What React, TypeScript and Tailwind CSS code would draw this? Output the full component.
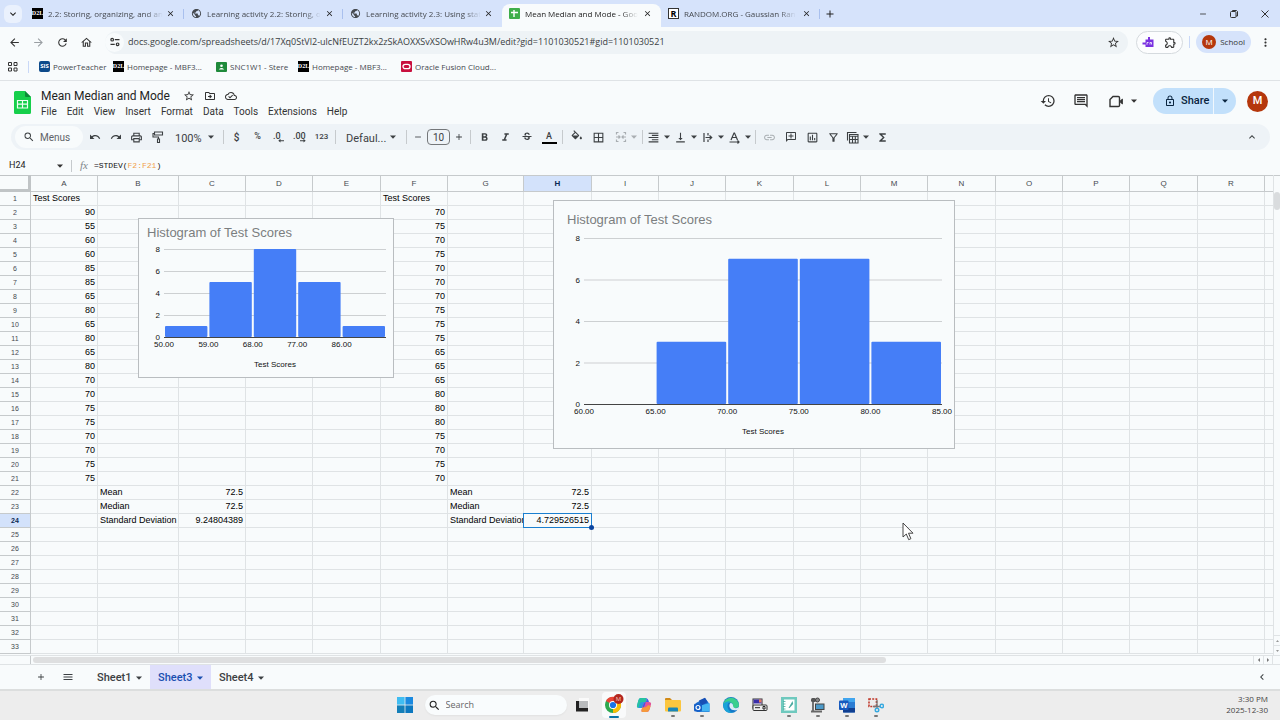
import type { ReactNode } from 'react';
import clsx from 'clsx';
import {
  MdAdd,
  MdArrowBack,
  MdArrowForward,
  MdBorderAll,
  MdChevronLeft,
  MdClose,
  MdExpandLess,
  MdExpandMore,
  MdFormatAlignRight,
  MdFormatBold,
  MdFormatItalic,
  MdFunctions,
  MdHistory,
  MdLink,
  MdMenu,
  MdMoreVert,
  MdOutlineAddComment,
  MdOutlineCloudDone,
  MdOutlineComment,
  MdOutlineDriveFileMove,
  MdOutlineExtension,
  MdOutlineFilterAlt,
  MdOutlineHome,
  MdOutlineInsertChart,
  MdOutlineLock,
  MdOutlinePrint,
  MdPublic,
  MdRedo,
  MdRefresh,
  MdRemove,
  MdSearch,
  MdStarOutline,
  MdStrikethroughS,
  MdUndo,
  MdVerticalAlignBottom,
} from 'react-icons/md';

const COLUMNS = [
  { id: 'A', width: 67 },
  { id: 'B', width: 81 },
  { id: 'C', width: 67 },
  { id: 'D', width: 67 },
  { id: 'E', width: 68 },
  { id: 'F', width: 67 },
  { id: 'G', width: 76 },
  { id: 'H', width: 68 },
  { id: 'I', width: 67 },
  { id: 'J', width: 67 },
  { id: 'K', width: 68 },
  { id: 'L', width: 67 },
  { id: 'M', width: 67 },
  { id: 'N', width: 68 },
  { id: 'O', width: 67 },
  { id: 'P', width: 67 },
  { id: 'Q', width: 68 },
  { id: 'R', width: 67 },
];

const ROW_COUNT = 33;
const ACTIVE = { column: 'H', row: 24 };

const scoresA = [90, 55, 60, 60, 85, 85, 65, 80, 65, 80, 65, 80, 70, 70, 75, 75, 70, 70, 75, 75];
const scoresF = [70, 75, 70, 75, 70, 70, 70, 75, 75, 75, 65, 65, 65, 80, 80, 80, 75, 70, 75, 70];

const cells: Record<string, string | number> = {
  A1: 'Test Scores',
  F1: 'Test Scores',
  B22: 'Mean',
  C22: 72.5,
  B23: 'Median',
  C23: 72.5,
  B24: 'Standard Deviation',
  C24: 9.24804389,
  G22: 'Mean',
  H22: 72.5,
  G23: 'Median',
  H23: 72.5,
  G24: 'Standard Deviation',
  H24: 4.729526515,
};
scoresA.forEach((score, i) => (cells[`A${i + 2}`] = score));
scoresF.forEach((score, i) => (cells[`F${i + 2}`] = score));

function Caret({ className = 'h-1 w-1.5' }: { className?: string }) {
  return (
    <svg viewBox="0 0 6 4" className={clsx('shrink-0', className)} fill="currentColor">
      <path d="M0 .5h6L3 3.7z" />
    </svg>
  );
}

/* ---------- Browser ---------- */

function D2LIcon() {
  return (
    <span className="flex h-[11px] w-[11px] shrink-0 items-center justify-center bg-black font-['Liberation_Serif',serif] text-[6px] font-bold text-white">
      D2L
    </span>
  );
}

function SheetsFavicon() {
  return (
    <svg viewBox="0 0 11 11" className="h-[11px] w-[11px] shrink-0">
      <rect width="11" height="11" rx="1" fill="#3fae49" />
      <path d="M5 2v7M2 4.5h7" stroke="#fff" strokeWidth="1.4" />
    </svg>
  );
}

const browserTabs: { title: string; icon: ReactNode; active?: boolean; divider?: boolean }[] = [
  { title: '2.2: Storing, organizing, and an', icon: <D2LIcon />, divider: true },
  {
    title: 'Learning activity 2.2: Storing, o',
    icon: <MdPublic className="h-[11px] w-[11px] shrink-0" />,
    divider: true,
  },
  {
    title: 'Learning activity 2.3: Using stat',
    icon: <MdPublic className="h-[11px] w-[11px] shrink-0" />,
  },
  { title: 'Mean Median and Mode - Goo', icon: <SheetsFavicon />, active: true },
  {
    title: 'RANDOM.ORG - Gaussian Ran',
    icon: (
      <span className="flex h-[11px] w-[11px] shrink-0 items-center justify-center border border-[#333] bg-white text-[9px] font-bold text-black">
        R
      </span>
    ),
    divider: true,
  },
];

function TabStrip() {
  return (
    <div className="flex h-[27px] items-center bg-[#d6e3fb] text-[#45494f]">
      <button
        aria-label="Search tabs"
        className="mr-[3px] ml-1 flex h-[18px] w-[18px] items-center justify-center rounded-md bg-[#eaf1fd]"
      >
        <MdExpandMore className="h-3 w-3 text-[#222]" />
      </button>
      {browserTabs.map(tab => (
        <div
          key={tab.title}
          className={clsx(
            'flex h-[23px] w-[159px] items-center self-end pr-2 pb-1 pl-[7px]',
            tab.active && 'rounded-t-lg bg-[#f8fbfc] text-[#222]',
          )}
        >
          {tab.icon}
          <span className="ml-[5px] mask-r-from-85% text-[8px] leading-4 whitespace-nowrap">{tab.title}</span>
          <button aria-label={`Close ${tab.title}`} className="ml-auto">
            <MdClose className="h-[9px] w-[9px] text-[#222]" />
          </button>
          <span className={clsx('-mr-2 ml-2 h-2.5 w-px', tab.divider && 'bg-[#a9c0ee]')} />
        </div>
      ))}
      <button aria-label="New tab" className="ml-1 text-[#222]">
        <MdAdd className="h-3 w-3" />
      </button>
      <div className="mr-2.5 ml-auto flex items-center gap-[21px] text-[#333]">
        <button aria-label="Minimize">
          <MdRemove className="h-2.5 w-2.5" />
        </button>
        <button aria-label="Restore">
          <svg viewBox="0 0 10 10" className="h-2.5 w-2.5" fill="none" stroke="currentColor">
            <rect x="1.5" y="2.5" width="5.5" height="6" rx="1" />
            <path d="M3.5 2.5v-1h4l1 1v4.5h-1.5" />
          </svg>
        </button>
        <button aria-label="Close window">
          <svg viewBox="0 0 10 10" className="h-2.5 w-2.5" stroke="currentColor">
            <path d="M1.5 1.5l7 7M8.5 1.5l-7 7" />
          </svg>
        </button>
      </div>
    </div>
  );
}

function AddressBar() {
  return (
    <div className="flex h-[30px] items-center px-2 text-[#45494f]">
      <div className="mr-3 flex items-center gap-[11px] text-[#333]">
        <button aria-label="Back">
          <MdArrowBack className="h-[13px] w-[13px]" />
        </button>
        <button aria-label="Forward" className="text-[#9a9fa3]">
          <MdArrowForward className="h-[13px] w-[13px]" />
        </button>
        <button aria-label="Reload">
          <MdRefresh className="h-[13px] w-[13px]" />
        </button>
        <button aria-label="Home">
          <MdOutlineHome className="h-[13px] w-[13px]" />
        </button>
      </div>
      <div className="flex h-[23px] flex-1 items-center rounded-full bg-[#eef3f6] pr-2">
        <span className="flex h-[19px] w-[19px] items-center justify-center rounded-full bg-[#f8fbfc]">
          <svg viewBox="0 0 10 10" className="h-2.5 w-2.5" fill="none" stroke="#333" strokeWidth="1.2">
            <circle cx="2.2" cy="2.7" r="1.3" />
            <path d="M4.8 2.7h4.7M.5 7.3h4.2" />
            <circle cx="7.6" cy="7.3" r="1.3" />
          </svg>
        </span>
        <input
          aria-label="Address"
          className="ml-1 min-w-0 flex-1 bg-transparent text-[9px] text-[#3a3e42] outline-none"
          defaultValue="docs.google.com/spreadsheets/d/17Xq0StVl2-ulcNfEUZT2kx2zSkAOXXSvXSOwHRw4u3M/edit?gid=1101030521#gid=1101030521"
        />
        <button aria-label="Bookmark this tab">
          <MdStarOutline className="h-[13px] w-[13px] text-[#333]" />
        </button>
      </div>
      <div className="ml-2 flex h-[23px] w-[47px] items-center justify-around rounded-full border border-[#d5dade] bg-white/60">
        <button aria-label="Read and write extension">
          <svg viewBox="0 0 12 12" className="h-3 w-3" fill="#7a32e0">
            <path d="M6 1h2v2.5h3.5V11h-8V8.5H.5v-2h3v-3H6z" />
            <path d="M5 8.7V6.5h1.5M8 8.5v-2h1.5v2" stroke="#fff" strokeWidth=".8" fill="none" />
          </svg>
        </button>
        <button aria-label="Extensions">
          <MdOutlineExtension className="h-[13px] w-[13px] text-[#333]" />
        </button>
      </div>
      <span className="mx-1.5 h-3 w-px bg-[#c9d8f7]" />
      <button className="flex h-[22px] items-center gap-1 rounded-full bg-[#d6e3fb] px-1.5 text-[8px] text-[#333]">
        <span className="flex h-[14px] w-[14px] items-center justify-center rounded-full bg-[#b5370c] text-white">
          M
        </span>
        School
      </button>
      <button aria-label="Browser menu" className="ml-2">
        <MdMoreVert className="h-[13px] w-[13px] text-[#333]" />
      </button>
    </div>
  );
}

const bookmarks: { label: string; icon: ReactNode; width: string }[] = [
  {
    label: 'PowerTeacher',
    width: 'w-[74px]',
    icon: (
      <span className="flex h-[11px] w-[11px] shrink-0 items-center justify-center rounded-xs bg-[#0d4a8a] text-[6px] font-bold text-white">
        SIS
      </span>
    ),
  },
  { label: 'Homepage - MBF3...', width: 'w-[103px]', icon: <D2LIcon /> },
  {
    label: 'SNC1W1 - Stere',
    width: 'w-[82px]',
    icon: (
      <svg viewBox="0 0 11 10" className="h-2.5 w-[11px] shrink-0">
        <rect width="11" height="10" rx="1" fill="#1f8a3b" />
        <circle cx="5.5" cy="3.8" r="1.3" fill="#fff" />
        <path d="M2.8 7.5q2.7-2.8 5.4 0z" fill="#fff" />
      </svg>
    ),
  },
  { label: 'Homepage - MBF3...', width: 'w-[103px]', icon: <D2LIcon /> },
  {
    label: 'Oracle Fusion Cloud...',
    width: 'w-[110px]',
    icon: (
      <svg viewBox="0 0 11 11" className="h-[11px] w-[11px] shrink-0">
        <rect width="11" height="11" rx="1" fill="#c8103e" />
        <rect x="2" y="3.3" width="7" height="4.4" rx="2.2" fill="none" stroke="#fff" strokeWidth="1.3" />
      </svg>
    ),
  },
];

function BookmarksBar() {
  return (
    <nav className="flex h-6 items-center border-b border-[#dfe3e6] pb-1 pl-2 text-[8px] text-[#45494f]">
      <button aria-label="Apps">
        <svg viewBox="0 0 10 10" className="h-2.5 w-2.5" fill="none" stroke="#333">
          <path d="M.5.5h3v3h-3zM6 .5h3v3H6zM.5 6h3v3h-3zM6 6h3v3H6z" />
        </svg>
      </button>
      <span className="mx-2.5 h-3 w-px bg-[#c9d8f7]" />
      {bookmarks.map((b, i) => (
        <a key={i} href="#" className={clsx('flex items-center gap-[3px] whitespace-nowrap', b.width)}>
          {b.icon}
          {b.label}
        </a>
      ))}
    </nav>
  );
}

/* ---------- Sheets header ---------- */

const menus = ['File', 'Edit', 'View', 'Insert', 'Format', 'Data', 'Tools', 'Extensions', 'Help'];

function DocumentHeader() {
  return (
    <header className="flex h-[43px] items-center pr-3 pl-[14px] font-['Roboto',sans-serif] text-[#333]">
      <svg viewBox="0 0 17 23" className="h-[23px] w-[17px]">
        <path
          d="M1.5 0H11l6 6v15.5a1.5 1.5 0 0 1-1.5 1.5h-14A1.5 1.5 0 0 1 0 21.5v-20A1.5 1.5 0 0 1 1.5 0z"
          fill="#16cf4b"
        />
        <path d="M11 0l6 6h-5a1 1 0 0 1-1-1z" fill="#0c8a38" />
        <path d="M3.5 9.5h10V17h-10zM3.5 13.2h10M8.5 9.5V17" stroke="#f0fff4" strokeWidth="1.2" fill="none" />
      </svg>
      <div className="ml-[10px] pt-0.5">
        <div className="flex items-center gap-[9px]">
          <h1 className="mr-1 text-[12px] leading-4 text-[#1f1f1f]">Mean Median and Mode</h1>
          <button aria-label="Star">
            <MdStarOutline className="h-3 w-3" />
          </button>
          <button aria-label="Move">
            <MdOutlineDriveFileMove className="h-3 w-3" />
          </button>
          <button aria-label="Saved to Drive">
            <MdOutlineCloudDone className="h-3 w-3" />
          </button>
        </div>
        <nav className="flex gap-2.5 text-[10px] leading-[15px]">
          {menus.map(menu => (
            <button key={menu}>{menu}</button>
          ))}
        </nav>
      </div>
      <div className="ml-auto flex items-center pb-[3px]">
        <button aria-label="Version history">
          <MdHistory className="h-4 w-4" />
        </button>
        <button aria-label="Comments" className="ml-[17px]">
          <MdOutlineComment className="h-4 w-4" />
        </button>
        <button aria-label="Join a call" className="mr-4 ml-5 flex items-center gap-[7px]">
          <svg viewBox="0 0 15 13" className="h-[13px] w-[15px]" fill="none" stroke="currentColor" strokeWidth="1.4">
            <path d="M4 1.5h5.3q1.2 0 1.2 1.2v7.8q0 1-1.2 1H1v-7z" />
            <path d="M11.5 5.5l2-1.5v5l-2-1.5z" fill="currentColor" strokeWidth=".8" />
          </svg>
          <Caret />
        </button>
        <div className="flex h-[26px] overflow-hidden rounded-full bg-[#c2e0fb] text-[#0a2540]">
          <button className="flex w-[61px] items-center gap-[5px] border-r border-[#f0f7fd] pl-[11px] text-[11px] font-medium">
            <MdOutlineLock className="h-3 w-3" />
            Share
          </button>
          <button aria-label="Quick sharing actions" className="flex w-[22px] items-center justify-center">
            <Caret />
          </button>
        </div>
        <button
          aria-label="Account"
          className="ml-[11px] flex h-[21px] w-[21px] items-center justify-center rounded-full bg-[#b5370c] text-[11px] font-medium text-white"
        >
          M
        </button>
      </div>
    </header>
  );
}

/* ---------- Toolbar ---------- */

type ToolProps = {
  label: string;
  children: ReactNode;
  width?: string;
  menu?: boolean;
  disabled?: boolean;
};

function Tool({ label, children, width = 'w-[22px]', menu, disabled }: ToolProps) {
  return (
    <button
      aria-label={label}
      disabled={disabled}
      className={clsx(
        'flex h-5 shrink-0 items-center',
        menu ? 'gap-1 pl-0.5' : 'justify-center',
        disabled && 'text-[#a9aeb2]',
        width,
      )}
    >
      {children}
      {menu && <Caret />}
    </button>
  );
}

function Divider() {
  return <span className="mx-0.5 h-3.5 w-px shrink-0 bg-[#c6cacd]" />;
}

function Toolbar() {
  return (
    <div className="mr-[10px] ml-[11px] flex h-[26px] items-center rounded-full bg-[#eef3f7] pr-3 pl-1 font-['Roboto',sans-serif] text-[#3c4043]">
      <label className="mr-px flex h-[22px] w-[68px] shrink-0 items-center gap-[5px] rounded-full bg-[#f8fbfc] pl-2">
        <MdSearch className="h-3 w-3 shrink-0" />
        <input
          aria-label="Search menus"
          placeholder="Menus"
          className="w-9 bg-transparent text-[10px] outline-none placeholder:text-[#5f6368]"
        />
      </label>
      <Tool label="Undo" width="w-[21px]">
        <MdUndo className="h-3 w-3" />
      </Tool>
      <Tool label="Redo" width="w-[21px]">
        <MdRedo className="h-3 w-3" />
      </Tool>
      <Tool label="Print" width="w-[21px]">
        <MdOutlinePrint className="h-[13px] w-[13px]" />
      </Tool>
      <Tool label="Paint format">
        <svg viewBox="0 0 12 12" className="h-3 w-3" fill="none" stroke="currentColor" strokeWidth="1.1">
          <path d="M2.5 1h8v3h-8zM2.5 2.5H1V6h5.5v2M5.5 8h2v3.5h-2z" />
        </svg>
      </Tool>
      <span className="relative w-[52px] shrink-0">
        <select aria-label="Zoom" className="w-full appearance-none bg-transparent pl-1.5 text-[11px] outline-none">
          <option>100%</option>
        </select>
        <Caret className="pointer-events-none absolute top-1/2 right-[7px] h-1 w-1.5 -translate-y-1/2" />
      </span>
      <Divider />
      <Tool label="Format as currency" width="w-[21px]">
        <span className="text-[10px] font-medium">$</span>
      </Tool>
      <Tool label="Format as percent" width="w-[21px]">
        <span className="text-[9px] font-medium">%</span>
      </Tool>
      <Tool label="Decrease decimal places" width="w-[21px]">
        <svg viewBox="0 0 14 12" className="h-3 w-3.5" fill="currentColor">
          <text x="1" y="8" fontSize="9" fontWeight="500">
            .0
          </text>
          <path d="M12 9.2H8.5V7.8L6.3 9.7l2.2 1.9v-1.3H12z" />
        </svg>
      </Tool>
      <Tool label="Increase decimal places" width="w-[21px]">
        <svg viewBox="0 0 14 12" className="h-3 w-3.5" fill="currentColor">
          <text x="0" y="8" fontSize="9" fontWeight="500">
            .00
          </text>
          <path d="M7 9.2h3.5V7.8l2.2 1.9-2.2 1.9v-1.3H7z" />
        </svg>
      </Tool>
      <Tool label="More formats" width="w-[23px]">
        <span className="text-[8px] font-medium">123</span>
      </Tool>
      <Divider />
      <span className="relative w-[66px] shrink-0">
        <select aria-label="Font" className="w-full appearance-none bg-transparent pl-2 text-[11px] outline-none">
          <option>Defaul...</option>
        </select>
        <Caret className="pointer-events-none absolute top-1/2 right-2 h-1 w-1.5 -translate-y-1/2" />
      </span>
      <Divider />
      <Tool label="Decrease font size" width="w-[18px]">
        <MdRemove className="h-2.5 w-2.5" />
      </Tool>
      <input
        aria-label="Font size"
        defaultValue="10"
        className="h-4 w-[23px] shrink-0 rounded-sm border border-[#74777a] bg-transparent text-center text-[10px] outline-none"
      />
      <Tool label="Increase font size" width="w-[18px]">
        <MdAdd className="h-2.5 w-2.5" />
      </Tool>
      <Divider />
      <Tool label="Bold">
        <MdFormatBold className="h-[13px] w-[13px]" />
      </Tool>
      <Tool label="Italic" width="w-[21px]">
        <MdFormatItalic className="h-[13px] w-[13px]" />
      </Tool>
      <Tool label="Strikethrough">
        <MdStrikethroughS className="h-3 w-3" />
      </Tool>
      <Tool label="Text color">
        <span className="w-[15px] border-b-2 border-black text-[9px] leading-[11px] font-medium">A</span>
      </Tool>
      <Divider />
      <Tool label="Fill color">
        <svg viewBox="0 0 24 18" className="mb-1 h-[10px] w-[13px]" fill="currentColor">
          <path d="M16.56 8.94L7.62 0 6.21 1.41l2.38 2.38-5.15 5.15a1.49 1.49 0 0 0 0 2.12l5.5 5.5c.29.29.68.44 1.06.44s.77-.15 1.06-.44l5.5-5.5c.59-.58.59-1.53 0-2.12zM5.21 10L10 5.21 14.79 10H5.21zM20 11.500s-2 2.170-2 3.500c0 1.100.9 2 2 2s2-.9 2-2c0-1.330-2-3.500-2-3.500z" />
        </svg>
      </Tool>
      <Tool label="Borders">
        <MdBorderAll className="h-[13px] w-[13px]" />
      </Tool>
      <Tool label="Merge cells" width="w-[31px]" menu disabled>
        <svg viewBox="0 0 12 12" className="ml-1 h-3 w-3" fill="none" stroke="currentColor" strokeWidth="1.2">
          <path d="M3.5 1.5h-2v2M8.5 1.5h2v2M3.5 10.5h-2v-2M8.5 10.5h2v-2M1 6h3.5M11 6H7.5M3.5 4.5L5 6 3.500 7.500M8.500 4.500L7 6l1.500 1.500" />
        </svg>
      </Tool>
      <Divider />
      <Tool label="Horizontal align" width="w-[27px]" menu>
        <MdFormatAlignRight className="h-[13px] w-[13px]" />
      </Tool>
      <Tool label="Vertical align" width="w-[27px]" menu>
        <MdVerticalAlignBottom className="h-[13px] w-[13px]" />
      </Tool>
      <Tool label="Text wrapping" width="w-[27px]" menu>
        <svg viewBox="0 0 13 13" className="h-[13px] w-[13px]" fill="none" stroke="currentColor" strokeWidth="1.2">
          <path d="M3 2v9M7 2v2.5M7 8.500V11M4.500 6.500h6M8.500 4.500l2.200 2-2.200 2" />
        </svg>
      </Tool>
      <Tool label="Text rotation" width="w-[27px]" menu>
        <svg viewBox="0 0 13 13" className="h-[13px] w-[13px]" fill="none" stroke="currentColor" strokeWidth="1.2">
          <path d="M3 9l3-7h.5l3 7M4 6.500h4.500M1.500 11h9.500M9.500 9.500L11 11l-1.500 1.500" />
        </svg>
      </Tool>
      <Divider />
      <Tool label="Insert link" disabled>
        <MdLink className="h-[13px] w-[13px]" />
      </Tool>
      <Tool label="Insert comment">
        <MdOutlineAddComment className="h-3 w-3 -scale-x-100" />
      </Tool>
      <Tool label="Insert chart" width="w-[21px]">
        <MdOutlineInsertChart className="h-[13px] w-[13px]" />
      </Tool>
      <Tool label="Create a filter" width="w-[21px]">
        <MdOutlineFilterAlt className="h-[13px] w-[13px]" />
      </Tool>
      <Tool label="Table views" width="w-[27px]" menu>
        <svg viewBox="0 0 13 13" className="h-[13px] w-[13px]" fill="none" stroke="currentColor" strokeWidth="1.1">
          <path d="M1.500 9.500v-8h9M3.500 3.500H12V12H3.500zM3.500 5.200H12M3.500 8.500H12M6.500 5.500V12M9.300 5.500V12" />
        </svg>
      </Tool>
      <Tool label="Functions">
        <MdFunctions className="h-[13px] w-[13px]" />
      </Tool>
      <button aria-label="Hide the menus" className="ml-auto">
        <MdExpandLess className="h-3 w-3" />
      </button>
    </div>
  );
}

function FormulaBar() {
  return (
    <div className="flex h-[25px] items-center pt-1.5 pl-[9px]">
      <input
        aria-label="Name box"
        defaultValue="H24"
        className="w-12 bg-transparent font-['Roboto',sans-serif] text-[9px] text-[#222] outline-none"
      />
      <Caret className="h-1 w-1.5 text-[#333]" />
      <span className="mx-2 h-3 w-px bg-[#c6cacd]" />
      <span className="mr-1.5 font-['Liberation_Serif',serif] text-[11px] text-[#80868b] italic">fx</span>
      <div className="font-['Liberation_Mono',monospace] text-[8px] text-[#111]">
        =STDEV(<span className="text-[#f0a04b]">F2:F21</span>)
      </div>
    </div>
  );
}

/* ---------- Grid ---------- */

type HistogramProps = {
  width: number;
  height: number;
  titleX: number;
  titleY: number;
  plot: { left: number; right: number; top: number; bottom: number };
  bins: number[];
  ticks: string[];
};

function Histogram({ width, height, titleX, titleY, plot, bins, ticks }: HistogramProps) {
  const binWidth = (plot.right - plot.left) / bins.length;
  const scaleY = (v: number) => plot.bottom - ((plot.bottom - plot.top) * v) / 8;

  return (
    <svg
      width={width}
      height={height}
      role="img"
      aria-label="Histogram of Test Scores"
      className="block border border-[#b9bdc0] bg-[#f8fbfc] font-['Liberation_Sans',Arial,sans-serif]"
    >
      <text x={titleX} y={titleY} fontSize="13" fill="#7b7e80">
        Histogram of Test Scores
      </text>
      {[0, 2, 4, 6, 8].map(v => (
        <g key={v}>
          <rect x={plot.left} y={scaleY(v)} width={plot.right - plot.left} height="1" fill="#cdd0d2" />
          <text x={plot.left - 4} y={scaleY(v) + 3} fontSize="8" textAnchor="end" fill="#111">
            {v}
          </text>
        </g>
      ))}
      {bins.map((count, i) => (
        <rect
          key={i}
          x={plot.left + i * binWidth + 1}
          y={scaleY(count)}
          width={binWidth - 2}
          height={plot.bottom - scaleY(count)}
          rx={count ? 1 : 0}
          fill="#457ef7"
        />
      ))}
      <rect x={plot.left} y={plot.bottom} width={plot.right - plot.left} height="1" fill="#444" />
      {ticks.map((tick, i) => (
        <text key={tick} x={plot.left + i * binWidth} y={plot.bottom + 10} fontSize="8" textAnchor="middle" fill="#111">
          {tick}
        </text>
      ))}
      <text x={(plot.left + plot.right) / 2} y={plot.bottom + 30} fontSize="8" textAnchor="middle" fill="#111">
        Test Scores
      </text>
    </svg>
  );
}

function Cell({ column, row }: { column: string; row: number }) {
  const value = cells[`${column}${row}`];
  const active = column === ACTIVE.column && row === ACTIVE.row;

  return (
    <td
      className={clsx(
        'h-[14px] border-r border-b border-[#dfe3e5] p-0',
        active && 'relative',
        typeof value === 'number' && 'text-right',
      )}
    >
      <div className="h-[13px] overflow-hidden px-0.5 leading-[13px] whitespace-nowrap">{value}</div>
      {active && (
        <>
          <span className="absolute -inset-px border border-[#1a7fd0]" />
          <span className="absolute -right-[3px] -bottom-[3px] h-[5px] w-[5px] rounded-full bg-[#0b45a0]" />
        </>
      )}
    </td>
  );
}

function Grid() {
  return (
    <div className="flex min-h-0 flex-1">
      <div className="relative min-w-0 flex-1 overflow-hidden border-r border-[#dfe3e5]">
        <table className="w-full table-fixed border-separate border-spacing-0 font-['Liberation_Sans',Arial,sans-serif] text-[9px] text-black">
          <colgroup>
            <col className="w-[31px]" />
            {COLUMNS.map(c => (
              <col key={c.id} style={{ width: c.width }} />
            ))}
            <col />
          </colgroup>
          <thead>
            <tr className="text-[8px] text-[#45494f]">
              <th className="h-[17px] border-t border-r-3 border-b-3 border-[#c0c4c6] p-0" />
              {COLUMNS.map(c => (
                <th
                  key={c.id}
                  className={clsx(
                    'border-t border-r border-b border-[#c6cacc] p-0 leading-none',
                    c.id === ACTIVE.column ? 'bg-[#d3e2fb] font-bold text-[#0b2a55]' : 'font-normal',
                  )}
                >
                  {c.id}
                </th>
              ))}
              <th className="border-t border-b border-[#c6cacc] p-0" />
            </tr>
          </thead>
          <tbody>
            {Array.from({ length: ROW_COUNT }, (_, i) => i + 1).map(row => (
              <tr key={row}>
                <th
                  className={clsx(
                    'h-[14px] border-r border-b border-[#c6cacc] p-0 text-[7px] leading-none',
                    row === ACTIVE.row ? 'bg-[#d3e2fb] font-bold text-[#0b2a55]' : 'font-normal text-[#45494f]',
                  )}
                >
                  {row}
                </th>
                {COLUMNS.map(c => (
                  <Cell key={c.id} column={c.id} row={row} />
                ))}
                <td className="border-b border-[#dfe3e5] p-0" />
              </tr>
            ))}
          </tbody>
        </table>

        {/* Floating charts */}
        <div className="absolute top-[43px] left-[138px]">
          <Histogram
            width={256}
            height={160}
            titleX={8}
            titleY={18}
            plot={{ left: 25, right: 247, top: 30, bottom: 118 }}
            bins={[1, 5, 8, 5, 1]}
            ticks={['50.00', '59.00', '68.00', '77.00', '86.00']}
          />
        </div>
        <div className="absolute top-[25px] left-[553px]">
          <Histogram
            width={402}
            height={249}
            titleX={13}
            titleY={23}
            plot={{ left: 30, right: 388, top: 37, bottom: 203 }}
            bins={[0, 3, 7, 7, 3]}
            ticks={['60.00', '65.00', '70.00', '75.00', '80.00', '85.00']}
          />
        </div>

        {/* Mouse pointer */}
        <svg viewBox="0 0 12 19" className="absolute top-[347px] left-[902px] h-[19px] w-3">
          <path d="M1 1v14l3.300-3 2.400 5.700 2.200-1-2.400-5.500H11z" fill="#fff" stroke="#333" strokeWidth=".9" />
        </svg>
      </div>

      {/* Vertical scrollbar */}
      <div className="flex w-1.5 flex-col items-center border-t border-[#c6cacc] pt-4 text-[#777]">
        <span className="h-[18px] w-1.5 rounded-full bg-[#d9dcde]" />
        <span className="mt-auto flex h-2.5 w-full items-center justify-center border-t border-[#dfe3e5]">
          <Caret className="h-0.5 w-[3px] rotate-180" />
        </span>
        <span className="flex h-2.5 w-full items-center justify-center border-t border-[#dfe3e5]">
          <Caret className="h-0.5 w-[3px]" />
        </span>
      </div>
    </div>
  );
}

function HorizontalScrollbar() {
  return (
    <div className="flex h-2.5 items-center border-t border-b border-[#dfe3e5] pr-[7px] text-[#777]">
      <span className="h-full w-[31px] border-r border-[#c6cacc]" />
      <span className="ml-0.5 h-1.5 w-[67%] rounded-full bg-[#dedfe0]" />
      <span className="ml-auto flex h-full w-2.5 items-center justify-center border-l border-[#dfe3e5]">
        <Caret className="h-1 w-1 rotate-90" />
      </span>
      <span className="flex h-full w-2.5 items-center justify-center border-x border-[#dfe3e5]">
        <Caret className="h-1 w-1 -rotate-90" />
      </span>
    </div>
  );
}

function SheetTabs() {
  return (
    <div className="flex h-6 items-center pl-9 font-['Roboto',sans-serif] text-[11px] text-[#3c4043]">
      <button aria-label="Add sheet">
        <MdAdd className="h-2.5 w-2.5" />
      </button>
      <button aria-label="All sheets" className="mr-[15px] ml-4">
        <MdMenu className="h-3 w-3" />
      </button>
      {['Sheet1', 'Sheet3', 'Sheet4'].map(name => (
        <button
          key={name}
          className={clsx(
            'flex h-full w-[61px] items-center justify-between pt-0.5 pr-2 pl-2 font-medium',
            name === 'Sheet3' && 'bg-[#dfdffb] text-[#1a4fb0]',
          )}
        >
          {name}
          <Caret />
        </button>
      ))}
      <button aria-label="Show side panel" className="mr-3 ml-auto">
        <MdChevronLeft className="h-3 w-3" />
      </button>
    </div>
  );
}

/* ---------- Taskbar ---------- */

const taskbarApps: { name: string; icon: ReactNode; running?: boolean }[] = [
  {
    name: 'Copilot',
    icon: (
      <>
        <path d="M5 1h4.500q1.500 0 1 2L9 8.500Q8.300 11 6 11H3Q.5 11 1 8.500L2.500 3Q3 1 5 1z" fill="#2a9be0" />
        <path d="M5 1h4.500q1.500 0 1 2L10 5H6Q4 5 3.300 8l-.5 2.500Q.5 10.500 1 8.500L2.500 3Q3 1 5 1z" fill="#27c3a0" />
        <path d="M10.500 5H13q2.500 0 2 2.500L13.700 12q-.7 3-3 3H6.500q-1.500 0-1-2L7 8q.7-3 3.500-3z" fill="#e2529a" />
        <path d="M9.500 1q2.500 0 3.500 4h-2.500Q8 5 7.200 8l-.7 3H6q2 0 2.700-2.500L10.500 3q.5-2-1-2z" fill="#4459e8" />
        <path d="M5.500 13l.8-2.500q3.700.5 6-2.500l2.300 1-1.200 3.500q-.7 2.500-3 2.500H6.500q-1.500 0-1-2z" fill="#f59a3c" />
      </>
    ),
  },
  {
    name: 'File Explorer',
    running: true,
    icon: (
      <>
        <path d="M0 2q0-1 1-1h4l2 2H0z" fill="#d28a16" />
        <path d="M0 3h15q1 0 1 1v9.500q0 1-1 1H1q-1 0-1-1z" fill="#fbc63f" />
        <path d="M3 14.500v-3q0-1 1-1h8q1 0 1 1v3z" fill="#1886b8" />
      </>
    ),
  },
  {
    name: 'Outlook',
    running: true,
    icon: (
      <>
        <path d="M2 6l9-5 4.500 6v8h-13z" fill="#1d6fd1" />
        <path d="M5 3.500L11 .8 13.500 5 7 9z" fill="#174fb5" />
        <path d="M5 9l10.500-3v8.500H6z" fill="#45b5f2" />
        <rect y="6.5" width="8" height="8" rx="1.5" fill="#1560c8" />
        <circle cx="4" cy="10.5" r="2" fill="none" stroke="#fff" strokeWidth="1.2" />
      </>
    ),
  },
  {
    name: 'Edge',
    icon: (
      <>
        <circle cx="8" cy="8" r="8" fill="#1579c8" />
        <path d="M.2 7A8 8 0 0 1 16 8.500Q15.500 11 12.500 11 9.500 11 10 9q.8-3-2.500-3.500Q3 5 .2 7z" fill="#3bcf8e" />
        <path d="M.2 7Q3 3.500 7.500 4.500 4 6 4.500 10q1 5 6 5.500Q4 17 1 12 0 9.500.2 7z" fill="#1aa3d8" />
        <path d="M7.500 6Q5.500 8 7 11t7.500 2L16 10q-3 2-5 .8-1-.8-1-2.300Q10 6 7.500 6z" fill="#fff" opacity=".85" />
      </>
    ),
  },
  {
    name: 'Settings',
    icon: (
      <>
        <rect x="1" y="2" width="9" height="9" fill="#fff" stroke="#333" />
        <path d="M1.500 2.500h8v4h-8z" fill="#3a2ea8" />
        <path d="M7 2.500h2.500v3H7z" fill="#e77a5b" />
        <rect x="1" y="8" width="14" height="5.5" rx="1" fill="#eee" stroke="#333" />
        <path d="M3 10.700h5M11 9.500h2V12h-2z" stroke="#222" fill="none" />
      </>
    ),
  },
  {
    name: 'Notebook',
    running: true,
    icon: (
      <>
        <rect width="16" height="16" fill="#6fc9be" />
        <rect x="3" y="2.5" width="10.5" height="11" fill="#fff" />
        <path d="M7.500 11l4-7 .7 3-3.700 4z" fill="#4aa99f" />
        <path d="M2 4.500h2.500M2 7h2.500M2 9.500h2.500M2 12h2.500" stroke="#4aa99f" strokeWidth=".8" />
      </>
    ),
  },
  {
    name: 'Camera',
    running: true,
    icon: (
      <>
        <rect x="1" y="1" width="5" height="4" rx="1.5" fill="#555" />
        <circle cx="7.5" cy="3" r="2" fill="#888" stroke="#444" />
        <path d="M3 5v9M1 14.500h11" stroke="#666" strokeWidth="1.8" />
        <rect x="5.5" y="7" width="8.5" height="5.5" fill="#4d9ac9" stroke="#444" />
      </>
    ),
  },
  {
    name: 'Word',
    running: true,
    icon: (
      <>
        <rect x="4" y="1" width="12" height="14.5" rx="1" fill="#2b7cd3" />
        <path d="M4 1h12v4H4z" fill="#41a5ee" />
        <path d="M4 11h12v4.500H4z" fill="#103f91" />
        <rect y="3.5" width="9.5" height="9.5" rx="1" fill="#185abd" />
        <text x="4.8" y="11" fontSize="7.5" fontWeight="700" textAnchor="middle" fill="#fff">
          W
        </text>
      </>
    ),
  },
  {
    name: 'Snipping Tool',
    running: true,
    icon: (
      <>
        <rect x="1" y="2" width="7.5" height="7.5" fill="none" stroke="#c0392b" strokeWidth="1.6" strokeDasharray="2 1.2" />
        <path d="M9 3v8.500M5 9.500h7.500" stroke="#777" strokeWidth="1.3" />
        <circle cx="9" cy="13" r="1.8" fill="none" stroke="#36a9e0" strokeWidth="1.4" />
        <circle cx="13.8" cy="9" r="1.7" fill="none" stroke="#36a9e0" strokeWidth="1.4" />
      </>
    ),
  },
];

function Taskbar() {
  return (
    <footer className="grid h-[31px] grid-cols-[1fr_auto_1fr] items-center border-t-2 border-[#dcdede] bg-[#ededed] pb-px font-['Open_Sans',sans-serif]">
      <span />
      <div className="flex items-center">
        <button aria-label="Start">
          <svg viewBox="0 0 16 16" className="h-4 w-4">
            <path d="M0 0h7.600v7.600H0z" fill="#40bdf2" />
            <path d="M8.400 0H16v7.600H8.400z" fill="#1b8ae0" />
            <path d="M0 8.400h7.600V16H0z" fill="#147fb8" />
            <path d="M8.400 8.400H16V16H8.400z" fill="#0c78bf" />
          </svg>
        </button>
        <label className="mr-[7px] ml-3 flex h-5 w-[142px] items-center gap-[5px] rounded-full bg-[#f9fcfd] pl-[3px] shadow-xs">
          <MdSearch className="h-[13px] w-[13px] text-[#222]" />
          <input
            aria-label="Search"
            placeholder="Search"
            className="w-24 bg-transparent text-[9px] outline-none placeholder:text-[#666]"
          />
        </label>
        <button aria-label="Task view" className="mr-[13px] ml-px">
          <svg viewBox="0 0 14 14" className="h-3.5 w-3.5">
            <path d="M4 0h10v10H4z" fill="#fafafa" />
            <path d="M1 3h3v7h9v3.500H1z" fill="#222" />
            <path d="M4 3h9v7H4z" fill="#b9bbbd" />
          </svg>
        </button>
        <button
          aria-label="Google Chrome"
          className="mr-2.5 flex h-[26px] w-6 flex-col items-center justify-end rounded-sm bg-[#f9fafb]"
        >
          <svg viewBox="0 0 20 20" className="h-5 w-5">
            <circle cx="9" cy="11" r="8" fill="#2da94f" />
            <path d="M9 11L2 7a8 8 0 0 1 14 0H9z" fill="#ea4335" />
            <path d="M9 11l7-4a8 8 0 0 1-7 12z" fill="#fbbc05" />
            <circle cx="9" cy="11" r="4" fill="#fff" />
            <circle cx="9" cy="11" r="3.1" fill="#1a73e8" />
            <circle cx="14.5" cy="5" r="5" fill="#b3261e" />
            <text x="14.5" y="7" fontSize="6" textAnchor="middle" fill="#f6c9bd">
              M
            </text>
          </svg>
          <span className="mt-0.5 h-0.5 w-2.5 rounded-full bg-[#0a74a8]" />
        </button>
        <div className="flex gap-[13px]">
          {taskbarApps.map(app => (
            <button key={app.name} aria-label={app.name} className="flex flex-col items-center pt-[3px]">
              <svg viewBox="0 0 16 16" className="h-4 w-4">
                {app.icon}
              </svg>
              <span className={clsx('mt-0.5 h-0.5 w-1 rounded-full', app.running && 'bg-[#777]')} />
            </button>
          ))}
        </div>
      </div>
      <div className="pr-3 pb-[3px] text-right text-[8px] leading-[11px] text-[#444]">
        <div>3:30 PM</div>
        <div>2025-12-30</div>
      </div>
    </footer>
  );
}

export default function App() {
  return (
    <div className="flex h-screen flex-col overflow-hidden bg-[#f8fbfc] font-['Open_Sans',sans-serif]">
      <TabStrip />
      <AddressBar />
      <BookmarksBar />
      <DocumentHeader />
      <Toolbar />
      <FormulaBar />
      <Grid />
      <HorizontalScrollbar />
      <SheetTabs />
      <Taskbar />
    </div>
  );
}
